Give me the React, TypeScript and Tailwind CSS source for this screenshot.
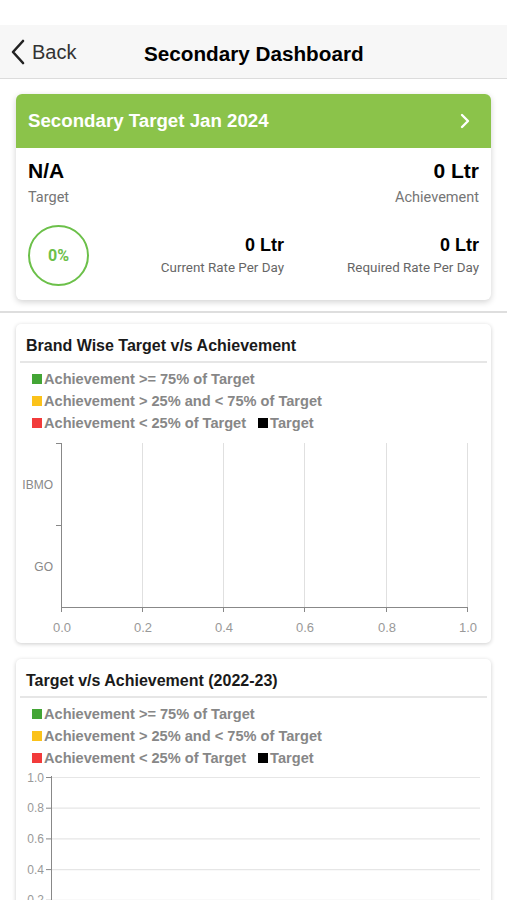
import React from "react";

const legend = [
  { c: "bg-[#43a535]", t: "Achievement >= 75% of Target" },
  { c: "bg-[#fbc21a]", t: "Achievement > 25% and < 75% of Target" },
];

function Legend() {
  return (
    <div className="pl-[16px] pt-[5px] text-[14.6px] font-bold text-[#878787] leading-[22px] font-['Liberation_Sans',Arial,sans-serif]">
      {legend.map((l) => (
        <div key={l.t} className="flex items-center">
          <span className={`inline-block w-[10px] h-[10px] mr-[2px] ${l.c}`} />
          <span>{l.t}</span>
        </div>
      ))}
      <div className="flex items-center">
        <span className="inline-block w-[10px] h-[10px] mr-[2px] bg-[#f23b3b]" />
        <span>Achievement &lt; 25% of Target</span>
        <span className="inline-block w-[10px] h-[10px] ml-[12px] mr-[2px] bg-black" />
        <span>Target</span>
      </div>
    </div>
  );
}

function CardTitle({ children }: { children: React.ReactNode }) {
  return (
    <div className="px-[4px]">
      <div className="h-[39px] flex items-end pb-[3px] pl-[6px] border-b-2 border-[#e6e6e6] text-[16px] font-bold text-[#1a1a1a] font-['Liberation_Sans',Arial,sans-serif]">
        {children}
      </div>
    </div>
  );
}

export default function App() {
  const xs = [45, 126, 207, 288, 370, 451];
  const xl = ["0.0", "0.2", "0.4", "0.6", "0.8", "1.0"];
  return (
    <div className="w-[507px] h-[900px] overflow-hidden bg-white font-['Liberation_Sans',Arial,sans-serif]">
      <div className="h-[25px] bg-white" />
      <div className="h-[54px] bg-[#f7f7f7] border-b border-[#dcdcdc] flex items-center relative">
        <div className="flex items-center pl-[10px] text-[#333]">
          <svg width="16" height="26" viewBox="0 0 16 26" className="mr-[6px]">
            <path d="M13 2 L3 13 L13 24" fill="none" stroke="#222" strokeWidth="2.6" strokeLinecap="round" strokeLinejoin="round" />
          </svg>
          <span className="text-[20px] text-[#333]">Back</span>
        </div>
        <div className="absolute left-[144px] top-[13px] text-[20.7px] font-bold text-black">Secondary Dashboard</div>
      </div>

      <div className="mx-[16px] mt-[15px] rounded-[6px] bg-white shadow-[0_2px_6px_rgba(0,0,0,0.18)] overflow-hidden">
        <div className="h-[54px] bg-[#8bc34a] flex items-center justify-between pl-[12px] pr-[20px]">
          <span className="text-white font-bold text-[18.7px]">Secondary Target Jan 2024</span>
          <svg width="12" height="16" viewBox="0 0 12 16">
            <path d="M3 2 L9 8 L3 14" fill="none" stroke="white" strokeWidth="2.4" strokeLinecap="round" strokeLinejoin="round" />
          </svg>
        </div>
        <div className="px-[12px] pt-[10px] pb-[14px]">
          <div className="flex justify-between items-start">
            <div>
              <div className="text-[21px] font-bold text-black leading-[26px]">N/A</div>
              <div className="text-[14.5px] text-[#757575] leading-[20px] mt-[4px] font-['Roboto',sans-serif]">Target</div>
            </div>
            <div className="text-right">
              <div className="text-[21px] font-bold text-black leading-[26px]">0 Ltr</div>
              <div className="text-[14.5px] text-[#757575] leading-[20px] mt-[4px] font-['Roboto',sans-serif]">Achievement</div>
            </div>
          </div>
          <div className="flex items-center mt-[17px]">
            <div className="w-[61px] h-[61px] rounded-full border-2 border-[#6cc04a] flex items-center justify-center text-[#6cc04a] font-bold text-[16px] font-['Roboto',sans-serif]">
              0%
            </div>
            <div className="flex-1 flex justify-end">
              <div className="text-right w-[180px]">
                <div className="text-[18px] font-bold text-black leading-[22px]">0 Ltr</div>
                <div className="text-[13.4px] text-[#666] leading-[20px] mt-[2px] font-['Roboto',sans-serif]">Current Rate Per Day</div>
              </div>
              <div className="text-right w-[195px]">
                <div className="text-[18px] font-bold text-black leading-[22px]">0 Ltr</div>
                <div className="text-[13.4px] text-[#666] leading-[20px] mt-[2px] font-['Roboto',sans-serif]">Required Rate Per Day</div>
              </div>
            </div>
          </div>
        </div>
      </div>

      <div className="mt-[11px] h-[2px] bg-[#dedede]" />

      <div className="mx-[16px] mt-[11px] h-[319px] rounded-[5px] bg-white shadow-[0_1px_4px_rgba(0,0,0,0.2)]">
        <CardTitle>Brand Wise Target v/s Achievement</CardTitle>
        <Legend />
        <svg width="475" height="210" viewBox="0 0 475 210" className="block">
          {xs.slice(1).map((x) => (
            <line key={x} x1={x + 0.5} y1="9" x2={x + 0.5} y2="174" stroke="#e0e0e0" strokeWidth="1" />
          ))}
          <line x1="45.5" y1="9" x2="45.5" y2="174" stroke="#888" strokeWidth="1" />
          <line x1="45" y1="173.5" x2="451" y2="173.5" stroke="#888" strokeWidth="1" />
          <line x1="40" y1="9.5" x2="45" y2="9.5" stroke="#888" />
          <line x1="40" y1="91.5" x2="45" y2="91.5" stroke="#888" />
          {xs.map((x) => (
            <line key={"t" + x} x1={x + 0.5} y1="173" x2={x + 0.5} y2="178" stroke="#888" />
          ))}
          <text x="37" y="55" textAnchor="end" fontSize="12" fill="#888" fontFamily="Liberation Sans, Arial, sans-serif">IBMO</text>
          <text x="37" y="137" textAnchor="end" fontSize="12" fill="#888" fontFamily="Liberation Sans, Arial, sans-serif">GO</text>
          {xs.map((x, i) => (
            <text key={"l" + x} x={x + 1} y="198" textAnchor="middle" fontSize="13" fill="#999" fontFamily="Liberation Sans, Arial, sans-serif">{xl[i]}</text>
          ))}
        </svg>
      </div>

      <div className="mx-[16px] mt-[16px] h-[300px] rounded-[5px] bg-white shadow-[0_1px_4px_rgba(0,0,0,0.2)]">
        <CardTitle>Target v/s Achievement (2022-23)</CardTitle>
        <Legend />
        <svg width="475" height="140" viewBox="0 0 475 140" className="block">
          {["1.0", "0.8", "0.6", "0.4", "0.2"].map((l, i) => {
            const y = 8 + i * 30.7;
            return (
              <g key={l}>
                <line x1="35" y1={y + 0.5} x2="464" y2={y + 0.5} stroke="#e6e6e6" strokeWidth="1.2" />
                <line x1="30" y1={y + 0.5} x2="35" y2={y + 0.5} stroke="#888" />
                <text x="28" y={y + 4.5} textAnchor="end" fontSize="12" fill="#999" fontFamily="Liberation Sans, Arial, sans-serif">{l}</text>
              </g>
            );
          })}
          <line x1="35.5" y1="7" x2="35.5" y2="140" stroke="#888" />
        </svg>
      </div>
    </div>
  );
}
